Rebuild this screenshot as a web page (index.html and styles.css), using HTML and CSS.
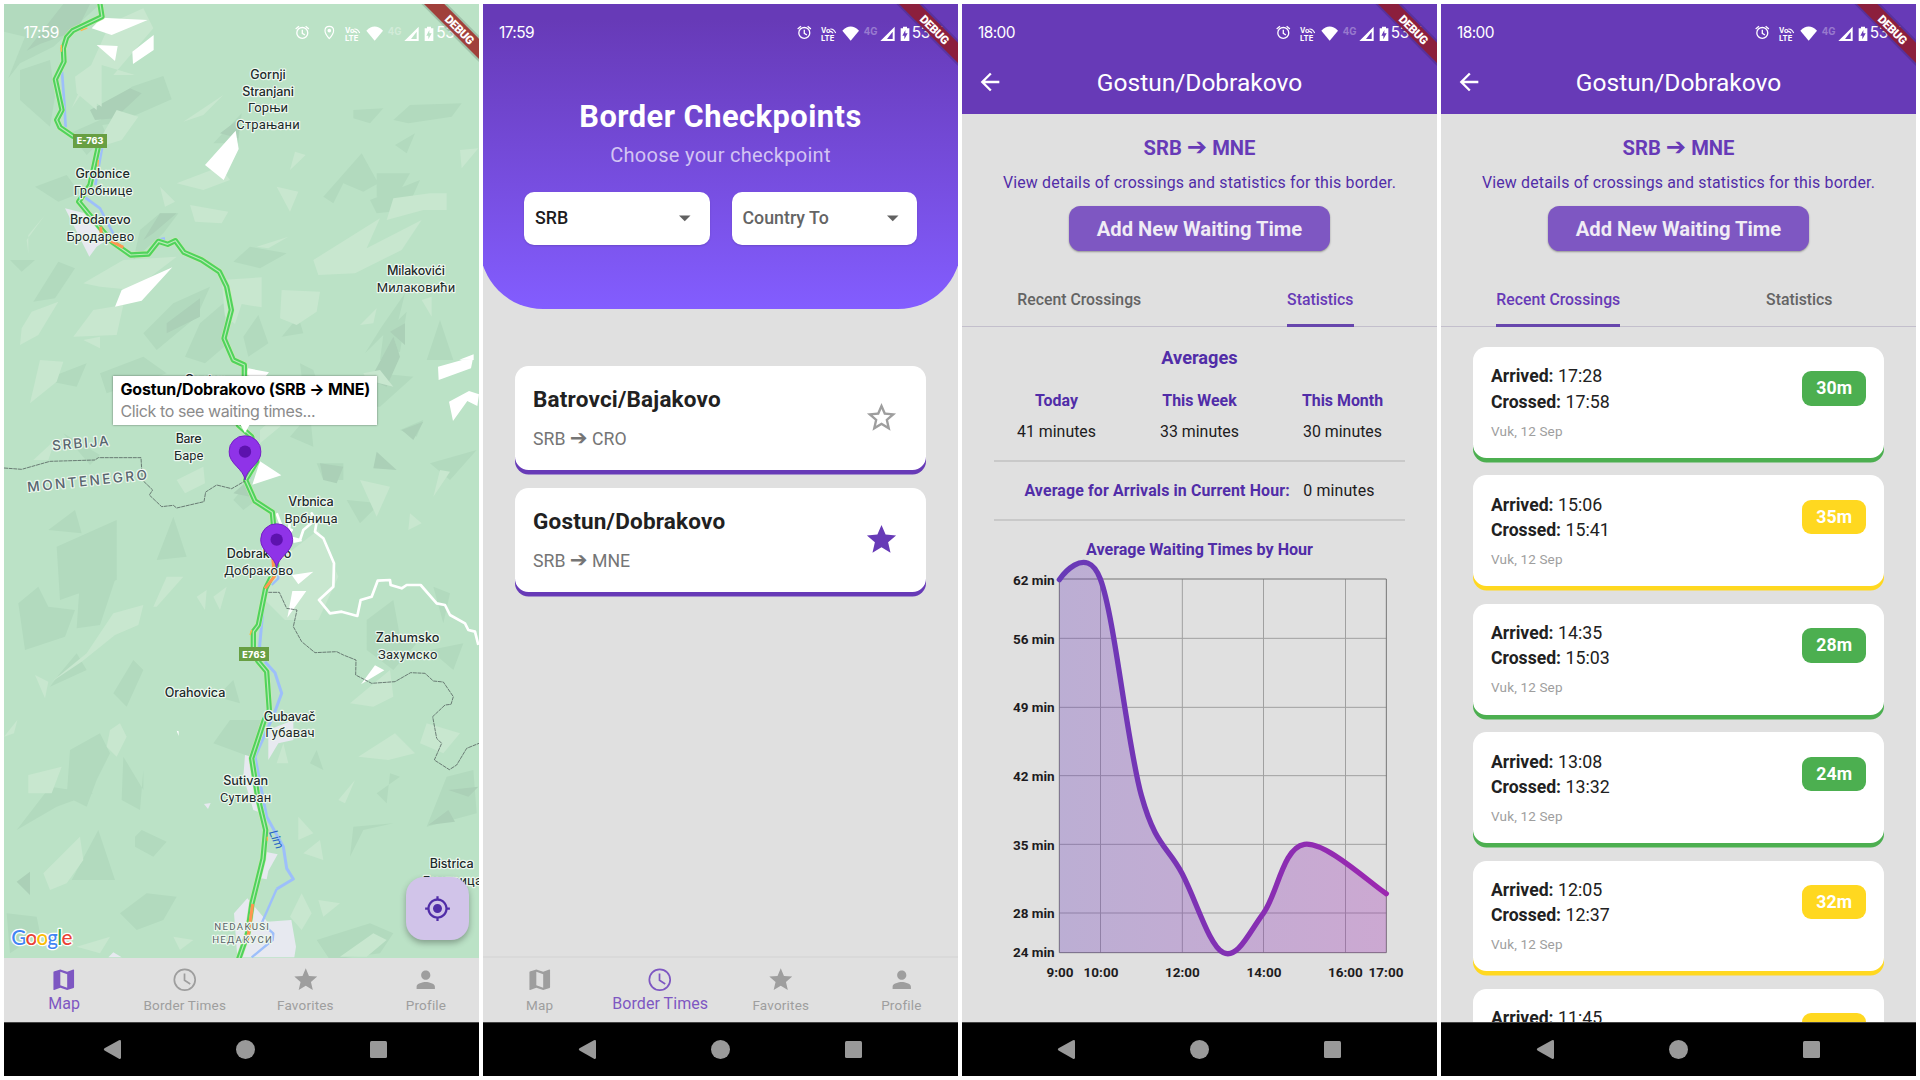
FILE: index.html
```html
<!DOCTYPE html>
<html lang="en">
<head>
<meta charset="utf-8">
<title>Border Checkpoints</title>
<link rel="stylesheet" href="styles.css">
</head>
<body>
<svg class="defs" aria-hidden="true">
  <symbol id="i-alarm" viewBox="0 0 44 44"><g fill="none" stroke="currentColor" stroke-width="4"><circle cx="22" cy="24" r="16.500"/><path d="M22 14v11l8 5M2 12l10-8M42 12L32 4"/></g></symbol>
  <symbol id="i-place" viewBox="0 0 44 44"><path d="M22 4c-8 0-13 6-13 13 0 9 13 24 13 24s13-15 13-24c0-7-5-13-13-13z" fill="none" stroke="currentColor" stroke-width="3.500"/><circle cx="22" cy="17" r="5.500" fill="currentColor"/></symbol>
  <symbol id="i-phone" viewBox="1015 66 290 56">
    <g fill="currentColor">
      <g font-family="Inter, sans-serif" font-weight="700" letter-spacing="0"><text x="1021" y="92" font-size="21" textLength="28" lengthAdjust="spacingAndGlyphs">Vo</text><text x="1021" y="116" font-size="24" textLength="40" lengthAdjust="spacingAndGlyphs">LTE</text><text x="1149" y="98" font-size="30" textLength="41" lengthAdjust="spacingAndGlyphs" opacity=".32">4G</text></g>
      <path d="M1110 116L1085 86q25-25 50 0z"/>
      <path d="M1242 74v43h-43zm-6 15l-17 22h17z" fill-rule="evenodd"/>
      <path d="M1260 79h7v-5h12v5h7v38h-26zm14 5l-9 17h6v11l10-18h-7z" fill-rule="evenodd"/>
    </g>
    <path d="M1049 81q10-1 16 12M1048 88q6 0 9 6M1054 77" stroke="currentColor" fill="none" stroke-width="3.500"/>
  </symbol>
  <symbol id="i-ribbon" viewBox="0 0 195 195">
    <path d="M10 0H88L195 107V186z" fill="#000" opacity=".14"/>
    <path class="band" d="M18 0H79L195 116V177z"/>
    <text transform="translate(116 86) rotate(45)" text-anchor="middle" font-family="Roboto, sans-serif" font-weight="900" font-size="35" textLength="108" fill="#fff">DEBUG</text>
  </symbol>
  <symbol id="i-map" viewBox="0 0 24 24"><path fill="currentColor" d="M20.500 3l-.16.03L15 5.100 9 3 3.360 4.900c-.21.07-.36.25-.36.48V20.500c0 .28.22.5.5.5l.16-.03L9 18.900l6 2.100 5.640-1.900c.21-.07.36-.25.36-.48V3.500c0-.28-.22-.5-.5-.5zM15 19l-6-2.110V5l6 2.110V19z"/></symbol>
  <symbol id="i-clock" viewBox="0 0 24 24"><g fill="none" stroke="currentColor" stroke-width="1.500"><circle cx="12" cy="12" r="9.100"/><path d="M11.800 6.500v6l5 3.200"/></g></symbol>
  <symbol id="i-star" viewBox="0 0 24 24"><path fill="currentColor" d="M12 17.270L18.180 21l-1.640-7.030L22 9.240l-7.190-.61L12 2 9.190 8.630 2 9.240l5.460 4.730L5.820 21z"/></symbol>
  <symbol id="i-star-o" viewBox="0 0 24 24"><path fill="currentColor" d="M22 9.240l-7.190-.62L12 2 9.190 8.630 2 9.240l5.460 4.730L5.820 21 12 17.270 18.180 21l-1.630-7.030L22 9.240zM12 15.400l-3.760 2.270 1-4.280-3.320-2.880 4.380-.38L12 6.100l1.710 4.040 4.380.38-3.320 2.880 1 4.280L12 15.400z"/></symbol>
  <symbol id="i-person" viewBox="0 0 24 24"><path fill="currentColor" d="M12 12c2.210 0 4-1.790 4-4s-1.790-4-4-4-4 1.790-4 4 1.790 4 4 4zm0 2c-2.670 0-8 1.340-8 4v2h16v-2c0-2.660-5.330-4-8-4z"/></symbol>
  <symbol id="i-back" viewBox="0 0 24 24"><path fill="currentColor" d="M20 11H7.830l5.590-5.590L12 4l-8 8 8 8 1.410-1.410L7.830 13H20v-2z"/></symbol>
  <symbol id="i-drop" viewBox="0 0 24 24"><path fill="currentColor" d="M7 10l5 5 5-5z"/></symbol>
  <symbol id="i-locate" viewBox="0 0 24 24"><path fill="currentColor" d="M12 8c-2.210 0-4 1.790-4 4s1.790 4 4 4 4-1.790 4-4-1.790-4-4-4zm8.940 3c-.46-4.170-3.770-7.480-7.940-7.940V1h-2v2.060C6.830 3.520 3.520 6.830 3.060 11H1v2h2.060c.46 4.170 3.770 7.480 7.940 7.940V23h2v-2.060c4.170-.46 7.480-3.770 7.940-7.940H23v-2h-2.060zM12 19c-3.870 0-7-3.130-7-7s3.130-7 7-7 7 3.130 7 7-3.130 7-7 7z"/></symbol>
  <symbol id="i-keys" viewBox="0 0 475 54"><g fill="#999"><path d="M96.500 26.300l14.500-8q2-.8 2 1.200v16q0 2-2 1.200l-14.500-8.200q-1.500-1.200 0-2.200z"/><circle cx="237.500" cy="27.500" r="9.500"/><rect x="362" y="19" width="17" height="17" rx="1.500"/></g></symbol>
  <symbol id="i-pin" viewBox="0 0 100 136"><path d="M50 134C46 100 2 86 2 49A48 48 0 0198 49C98 86 54 100 50 134z" fill="#8f33e8" stroke="#7420c4" stroke-width="3"/><circle cx="50" cy="49" r="18.500" fill="#5d12ae"/></symbol>
</svg>

<main class="board">
  <section class="phone phone-map">
    <div class="map">
      <svg class="map-art" viewBox="12 12 1425 2862">
        <defs><path id="road" d="M298 0l8 50-88 42-18 20-10 33 2 40-26 53 20 92-16 30 10 22 38 26 77 32-25 115-34 50 66 80 33 40 57 40 53-3 30-38 28 9 23-11 26 35 53 23 53 35 22 45 14 70-22 85 28 65 33 15v35l-18 145 40 35 15 75-33 55 28 63 52 34 5 53 8 110-33 65-22 110-15 20v65l15 25 25 30 8 115-15 30-38 115 18 115 24 100-8 87-33 133-13 90-28 80"/></defs>
        <g fill="#b2dabe">
          <path d="M12 12H300L215 90 160 140 60 190 25 235 75 110 12 95z"/>
          <path d="M60 210L150 180 165 290 150 380 60 300zM395 260l95-32 25 70-160 70-70 10zM210 400l90-40 20 45-60 60zM105 560l95-35 40 55-65 25zM30 780l75 0-40 35zM100 905l75-120 50 20-60 90zM480 640h55l-45 60-90 80 20-90z"/>
          <path d="M640 430l85-90-10 90zM1060 330l90-5-40 45-50-15zM1180 360l50-45 155-5-30 40-130 20zM1185 435l60-35-25 60zM970 590l115-130 50 90-45 25-60-25-30 60zM1130 520h100l-40 70h-60zM750 740l110 20-80 45-80-20zM1110 600l150-60-40 90-90 10z"/>
          <path d="M430 1000l90-90 110-50-40 90-120 100zM600 970l70-60 15 120-70 60-60-20zM730 1010l45-65 30 85-60 40zM845 1010l50-60 15 50zM1140 1080l10-75 70-70-20 120zM1215 880l-70 100-50 80 100-100zM1320 960l-40 120h80zM300 1120l130-50 70 50-180 60z"/>
          <path d="M190 1300l80 95 30-30zM130 1140l130-50-30 70zM900 1090l40 20 30 90-60-30zM820 1170l110 10-30 80-80-30zM1010 1220l120-100 110 10-100 90zM1200 1290l70-30-20 50zM950 1390h80v50h-60zM870 1310l60-70 10 100zM1290 1390l140-40-80 90zM700 1500l50-60 20 60-40 30z"/>
          <path d="M145 1590l80-60 20 70zM170 1640l180-80v180l-170 60zM470 1680l50-130 40 120zM240 1740l110-15-50 150-70 10zM55 1810l60-50 30 60 80 10-30 80-120 40zM1040 1500l100 10-60 60zM1100 1860l80-60 20 110 50 20-70 80-80-60zM1300 1760l50 20-20 90zM1290 1950l100-20-30 80zM180 2020l50-60 30 50-110 50zM650 2090l50-50 20 70zM340 2080l60-100 30 30-50 110z"/>
          <path d="M210 2250l90-50 30 60-40 80-30 80-60-30zM370 2270l60 100v-60l-10 120-55-30zM405 2510l20-20 75 35-40 45-55-30zM215 2640l80-150 50 150zM50 2490l100-130 130 20-110 40zM640 2230l50-70h110l-50 110zM950 2250l20 60-40-20zM1280 2480l60-150 80-20 10 130zM1060 2480l120-10-90 20-40 80zM360 2740l80-60 90 10-40 70-80 30zM1200 2330l-30-10-10 90-30-30zM20 2740l90 10 10 50-90 60zM950 2820l160-50 70 30-40 60-150 20z"/>
        </g>
        <g fill="#abd0b7">
          <path d="M190 12h80l-40 80-110 40-40 20zM270 330l120-65 35 15-80 75-60 5zM660 400l60-45-5 60zM430 720l50-80 50 0-70 60zM500 970l100-75v55l-100 50zM1170 995l45-25v65zM900 1210l30 50-70-30zM700 1480l45-40 5 50zM1205 1290l65-25-30 55zM960 1390l70 10-20 50-40-10zM1130 1355l60 55-70-5zM950 1175l80 60-80-30zM50 2645l40-30v70zM1285 2475l60-45 20 35z"/>
          <path d="M1110 1140l70-130 20 60-40 90zM1345 2370l90-10-30 30z"/>
        </g>
        <g fill="#c8e7cf">
          <path d="M330 70l100-45 30 60-120 140h65l-100-30v125l-60-40-30 45zM225 230l70-50-5 150-60-50zM550 365l120-80-60 60zM350 330l65 20-50 70-80 25zM530 550l130-50 30 40-80 30zM870 510l15-55 32 10zM830 560l65 15-25 60zM480 560l15 60 30-15zM570 615l115 20-20 35-80-5zM1380 450l55-5-50 60zM1290 580l50 0v50l-70 0-110 30 20-65z"/>
          <path d="M80 720l55-75-50 60v55zM940 780l200-125-40 90 165-85-60 90-140 70-110 5zM770 740l95-30-60 35zM250 850l120-70 160-10-130 100-100-10zM665 840l120-8v90l-60-10-20 60-30-25zM845 870l115 5-10 60-60 40-50-20zM1080 975l50-50-10 45zM65 985l30-50 80-30-60 100-55 30zM220 1010l60-80 90-15-20 90zM250 1020l50-10v35zM1265 900l30-10v60z"/>
          <path d="M120 1080l70 5-20 60-80 65zM100 1380l65-60-20 60zM530 1440l80-40 5 50-60 30zM780 1290l70-60-10 50-60 50zM1090 1120l50-10 40 50-80-20zM1080 1440l90 20-40 90zM1230 1540l35 30-40 20zM1300 1490l20-80 30 5zM460 1820l40-90 50 0-80 90zM590 1790l30-20-5 60zM640 1790l40-30-20 70zM260 1960l80-120 90-25-15 60-70 30-100 80-90 60zM105 2025l40 20-10 50zM1050 2110l120-100 10 80-60 30z"/>
          <path d="M825 1690l130-100 60 140-60 130-100 0-60-60z"/>
          <path d="M85 2325l100-25-30 80-70 0zM330 2190l30-20 20 40-30 60-30-30zM12 2210l40-50-10 40zM130 2620l110-110 10 70-50 70-50 20zM1075 2270l110-70 60 60-80 20zM1280 2170l100 30-50 60-70-30zM830 2290l20-60 15 60zM1015 2400l50-60-30 70zM895 2450l45 50-45 20zM910 2560l50-40 10 60zM870 2750l35-70 30 60-30 50zM955 2700l65 10-50 40zM230 2840l100-30-30 50zM1020 2870l100-70 40 20-60 50zM520 2810l60 10-40 30z"/>
        </g>
        <g fill="#fff">
          <path d="M275 85l30-32 138 7-108 45zM290 135l63 3-8 45zM397 155l64-50v45l-62 42zM615 495l92-103 9 55-45 93zM517 802L365 870 345 920l80-18zM1378 1079l43-16v17zM1314 1100l72-20h32l-5 25-97 35zM1347 1205l60-32 30 10-5 35-30-15-43 60zM745 1105l62 12-25 30-45-25zM780 1384l64 42-87 28zM875 1725l65-10-45 38zM877 1773h42l-57 80zM1083 2053l42-57 28 15zM530 2192l6 2v14z"/>
        </g>
        <g fill="#e7e9f0"><path d="M195 625l80 20 60 65-45 30-22 30zM735 2265l20 5 30 170-25-10-30-100zM795 2555l38 8-28 50-5 25-25-5zM702 2740l40-45 60 70 72-5 14 80-5 32H712zM805 2190l75-30v60l-45 10-30 50zM612 2412l20-3-8 18zM325 2872l15-15 25 15z"/></g>
        <g fill="none" stroke="#9dbffa" stroke-linejoin="round" stroke-width="9">
          <path d="M186 215l7 95 4 72M306 445l-20 110M255 592l45 33 42 80M470 720l25-5" stroke-width="8"/>
          <path d="M768 1385l-20 50M790 1815l-13 145M795 1985l30 33 20 62-22 60-58 130 35 180 50 90 10 65 20 32-50 30" />
          <path d="M835 1720v15l-20 20M830 2667l-45 103 35 30-2 20-63 52" stroke-width="7"/>
        </g>
        <g fill="none" stroke="#fff" stroke-linejoin="round" stroke-width="8">
          <path d="M830 1540l15 40 30 10-15 20 40 10 10-30 35-30-10-20 15 25-5 30 25 20 32 75-2 70-43 40 33 40 35-5 47 13 10-48 33-10 18-48 37-2 2 15 33 10 15-10h42l48 55 25 5 15 30 45 25 10 20 20 5 10 40M870 1560l-5 50M880 1625l25-5"/>
        </g>
        <g fill="none" stroke-linejoin="round">
          <use href="#road" class="road-case"/><use href="#road" class="road-body"/><use href="#road" class="road-mid"/>
          <path d="M302 680l3 40M330 722l40 20M818 1670l5 60-28 35M758 2712l-12 85-4 25" stroke="#ff9650" stroke-width="9"/>
          <path d="M295 480l-2 30M184 135v20M242 92l20-8M755 1890l-5 15M802 2510v12" stroke="#ffb54a" stroke-width="4"/>
        </g>
        <g fill="none" stroke="#5c6b66" stroke-width="2.600" stroke-dasharray="12 2">
          <path d="M12 1404l53 4 85-24 135-4 10-7h128l4 67 31 30-10 15 37 35 35-4 10 8 82-19 5-29 33-21 45 11 40-23"/>
          <path d="M805 1777h33l22 48 31 5-11 50 25 45 40 33 65-3 20 10 38 15-1 45 48 25 70-5 47-27 43 2 25 23 30 3 30 44-7 23-18 2-37 35 12 65 15 15-22 50 45 29 22-14 30-50 37-15"/>
        </g>
        <g class="shield"><path d="M219 402h102v42H219zM717 1941h90v42h-90z"/><text x="270" y="433" textLength="80">E-763</text><text x="762" y="1973" textLength="70">E763</text></g>
        <g class="latin">
          <text x="804" y="237" textLength="106">Gornji</text><text x="804" y="287" textLength="155">Stranjani</text>
          <text x="308" y="535" textLength="163">Grobnice</text><text x="301" y="672" textLength="182">Brodarevo</text>
          <text x="1248" y="826" textLength="174">Milakovići</text><text x="618" y="1151" textLength="128">Gostun</text>
          <text x="566" y="1330" textLength="78">Bare</text><text x="933" y="1518" textLength="136">Vrbnica</text>
          <text x="777" y="1675" textLength="194">Dobrakovo</text><text x="1223" y="1926" textLength="191">Zahumsko</text>
          <text x="585" y="2092" textLength="182">Orahovica</text><text x="869" y="2162" textLength="155">Gubavač</text>
          <text x="737" y="2355" textLength="135">Sutivan</text><text x="1355" y="2605" textLength="132">Bistrica</text>
        </g>
        <g class="cyr">
          <text x="804" y="337" textLength="120">Горњи</text><text x="804" y="387" textLength="190">Страњани</text>
          <text x="309" y="585" textLength="176">Гробнице</text><text x="301" y="722" textLength="203">Бродарево</text>
          <text x="1248" y="876" textLength="236">Милаковићи</text><text x="566" y="1380" textLength="88">Баре</text>
          <text x="933" y="1568" textLength="159">Врбница</text><text x="776" y="1724" textLength="207">Добраково</text>
          <text x="1223" y="1976" textLength="178">Захумско</text><text x="870" y="2211" textLength="148">Губавач</text>
          <text x="737" y="2405" textLength="154">Сутиван</text><text x="1357" y="2655" textLength="178">Бистрица</text>
        </g>
      </svg>
      <svg class="map-art map-top" viewBox="12 12 1425 2862">
        <g class="country"><text transform="translate(242 1341) rotate(-5)" y="3" textLength="170">SRBIJA</text><text transform="translate(263 1457) rotate(-6)" y="0" textLength="361">MONTENEGRO</text></g>
        <g class="town"><text x="725" y="2790" textLength="164">NEDAKUSI</text><text x="726" y="2828" textLength="179">НЕДАКУСИ</text></g>
        <text class="river" transform="translate(829 2518) rotate(66)" y="12" textLength="58">Lim</text>
        <text class="google" x="34" y="2834" textLength="183"><tspan fill="#4285f4">G</tspan><tspan fill="#ea4335">o</tspan><tspan fill="#fbbc05">o</tspan><tspan fill="#4285f4">g</tspan><tspan fill="#34a853">l</tspan><tspan fill="#ea4335">e</tspan></text>
        <use href="#i-pin" x="685" y="1306" width="100" height="136"/>
        <use href="#i-pin" x="780" y="1570" width="100" height="136"/>
      </svg>
      <div class="callout"><b>Gostun/Dobrakovo (SRB <i>→</i> MNE)</b><span>Click to see waiting times...</span></div>
      <div class="fab"><svg><use href="#i-locate"/></svg></div>
      <header class="status"><time>17:59</time><svg class="s-alarm"><use href="#i-alarm"/></svg><svg class="s-place"><use href="#i-place"/></svg><svg class="s-phone"><use href="#i-phone"/></svg><span>53%</span></header>
    </div>
    <nav class="tabs-bottom">
      <a class="on"><svg><use href="#i-map"/></svg>Map</a><a><svg><use href="#i-clock"/></svg>Border Times</a><a><svg><use href="#i-star"/></svg>Favorites</a><a><svg><use href="#i-person"/></svg>Profile</a>
    </nav>
    <footer class="keys"><svg><use href="#i-keys"/></svg></footer>
    <svg class="ribbon"><use href="#i-ribbon"/></svg>
  </section>

  <section class="phone">
    <div class="hero">
      <header class="status"><time>17:59</time><svg class="s-alarm"><use href="#i-alarm"/></svg><svg class="s-phone"><use href="#i-phone"/></svg><span>53%</span></header>
      <h1>Border Checkpoints</h1>
      <p>Choose your checkpoint</p>
      <div class="selects">
        <div class="select">SRB<svg><use href="#i-drop"/></svg></div>
        <div class="select empty">Country To<svg><use href="#i-drop"/></svg></div>
      </div>
    </div>
    <div class="checkpoints">
      <article class="checkpoint"><div><h2>Batrovci/Bajakovo</h2><p>SRB <i>➔</i> CRO</p></div><svg class="dim"><use href="#i-star-o"/></svg></article>
      <article class="checkpoint"><div><h2>Gostun/Dobrakovo</h2><p>SRB <i>➔</i> MNE</p></div><svg><use href="#i-star"/></svg></article>
    </div>
    <nav class="tabs-bottom ruled">
      <a><svg><use href="#i-map"/></svg>Map</a><a class="on"><svg><use href="#i-clock"/></svg>Border Times</a><a><svg><use href="#i-star"/></svg>Favorites</a><a><svg><use href="#i-person"/></svg>Profile</a>
    </nav>
    <footer class="keys"><svg><use href="#i-keys"/></svg></footer>
    <svg class="ribbon"><use href="#i-ribbon"/></svg>
  </section>

  <section class="phone">
    <div class="appbar">
      <header class="status"><time>18:00</time><svg class="s-alarm"><use href="#i-alarm"/></svg><svg class="s-phone"><use href="#i-phone"/></svg><span>53%</span></header>
      <div class="bar"><svg><use href="#i-back"/></svg><h1>Gostun/Dobrakovo</h1></div>
    </div>
    <div class="intro"><h2>SRB <i>➔</i> MNE</h2><p>View details of crossings and statistics for this border.</p><button>Add New Waiting Time</button></div>
    <div class="tabs"><span>Recent Crossings</span><span class="on">Statistics</span></div>
    <div class="stats">
      <h3>Averages</h3>
      <dl><div><dt>Today</dt><dd>41 minutes</dd></div><div><dt>This Week</dt><dd>33 minutes</dd></div><div><dt>This Month</dt><dd>30 minutes</dd></div></dl>
      <p class="hour"><b>Average for Arrivals in Current Hour:</b><span>0 minutes</span></p>
      <h4>Average Waiting Times by Hour</h4>
    </div>
    <svg class="chart" viewBox="6 681 1425 1239">
      <defs><linearGradient id="line" gradientUnits="userSpaceOnUse" x1="298" y1="0" x2="1279" y2="0"><stop offset="0" stop-color="#673ab7"/><stop offset="1" stop-color="#9c27b0"/></linearGradient></defs>
      <path d="M298 895H1279M298 1102H1279M298 1307H1279M298 1513H1279M298 1719H1279M421.500 717V1838M667 717V1838M910.500 717V1838M1156.500 717V1838" stroke="#a0a0a0" stroke-width="3"/>
      <path d="M298 717H1279V1838H298z" fill="none" stroke="#757575" stroke-width="3"/>
      <path d="M298 717C298 717 378 603.400 421 717C464 830.600 501 1211 544 1366C587 1521 624 1519 667 1602C710 1685 747.500 1817 790 1838C832.500 1859 867.500 1777 910 1720C952.500 1663 968 1523 1033 1513C1098 1503 1236 1635 1279 1661V1838H298z" fill="url(#line)" opacity=".3"/>
      <path d="M298 719C298 719 378 603.400 421 717C464 830.600 501 1211 544 1366C587 1521 624 1519 667 1602C710 1685 747.500 1817 790 1838C832.500 1859 867.500 1777 910 1720C952.500 1663 968 1523 1033 1513C1098 1503 1236 1635 1279 1661" fill="none" stroke="url(#line)" stroke-width="16" stroke-linecap="round"/>
      <g class="axis-y"><text x="284" y="735">62 min</text><text x="284" y="912">56 min</text><text x="284" y="1117">49 min</text><text x="284" y="1323">42 min</text><text x="284" y="1529">35 min</text><text x="284" y="1735">28 min</text><text x="284" y="1852">24 min</text></g>
      <g class="axis-x"><text x="300" y="1912">9:00</text><text x="423" y="1912">10:00</text><text x="667" y="1912">12:00</text><text x="912" y="1912">14:00</text><text x="1156" y="1912">16:00</text><text x="1278" y="1912">17:00</text></g>
    </svg>
    <footer class="keys"><svg><use href="#i-keys"/></svg></footer>
    <svg class="ribbon"><use href="#i-ribbon"/></svg>
  </section>

  <section class="phone">
    <div class="appbar">
      <header class="status"><time>18:00</time><svg class="s-alarm"><use href="#i-alarm"/></svg><svg class="s-phone"><use href="#i-phone"/></svg><span>53%</span></header>
      <div class="bar"><svg><use href="#i-back"/></svg><h1>Gostun/Dobrakovo</h1></div>
    </div>
    <div class="intro"><h2>SRB <i>➔</i> MNE</h2><p>View details of crossings and statistics for this border.</p><button>Add New Waiting Time</button></div>
    <div class="tabs"><span class="on">Recent Crossings</span><span>Statistics</span></div>
    <div class="crossings">
      <article class="crossing fast"><div><p><b>Arrived:</b> 17:28</p><p><b>Crossed:</b> 17:58</p><small>Vuk, 12 Sep</small></div><em>30m</em></article>
      <article class="crossing slow"><div><p><b>Arrived:</b> 15:06</p><p><b>Crossed:</b> 15:41</p><small>Vuk, 12 Sep</small></div><em>35m</em></article>
      <article class="crossing fast"><div><p><b>Arrived:</b> 14:35</p><p><b>Crossed:</b> 15:03</p><small>Vuk, 12 Sep</small></div><em>28m</em></article>
      <article class="crossing fast"><div><p><b>Arrived:</b> 13:08</p><p><b>Crossed:</b> 13:32</p><small>Vuk, 12 Sep</small></div><em>24m</em></article>
      <article class="crossing slow"><div><p><b>Arrived:</b> 12:05</p><p><b>Crossed:</b> 12:37</p><small>Vuk, 12 Sep</small></div><em>32m</em></article>
      <article class="crossing slow"><div><p><b>Arrived:</b> 11:45</p></div><em></em></article>
    </div>
    <footer class="keys"><svg><use href="#i-keys"/></svg></footer>
    <svg class="ribbon"><use href="#i-ribbon"/></svg>
  </section>
</main>
</body>
</html>
```
FILE: styles.css
```css
* { box-sizing: border-box; margin: 0; padding: 0; }
body { background: #fff; font-family: Roboto, sans-serif; overflow: hidden; }
.defs { display: none; }
i, em { font-style: normal; }
svg { display: block; flex: none; }

.board { display: grid; grid-template-columns: repeat(4, 475px); gap: 4px; padding: 4px 0 0 4px; }
.phone { --shift: 0px; position: relative; display: flex; flex-direction: column; height: 1072px; background: #e0e0e0; overflow: hidden; }
.phone-map { --shift: 3.600px; }

/* Status bar */
.status { display: flex; align-items: center; height: 57px; padding-left: 16px; color: #fff; font: 400 15.500px/20px Inter, sans-serif; letter-spacing: -.6px; width: 475px; }
.status time { flex: 1; padding-left: var(--shift); }
.s-alarm, .s-place { width: 14.600px; height: 14.600px; }
.s-alarm { margin-right: 6.700px; }
.s-place { margin: 0 7px 0 5px; }
.s-phone { width: 96.700px; height: 18.700px; margin-top: 2px; }
.status span { width: 46.300px; margin-left: -3.600px; letter-spacing: -.3px; }
.phone-map .status span { width: 42.800px; }

.ribbon { position: absolute; top: 0; right: 0; width: 65px; height: 65px; fill: #8c1f3d; }
.phone-map .ribbon { right: -3.600px; fill: #a0403b; }

/* System keys */
.keys { height: 54px; margin-top: auto; flex: none; position: relative; background: #000; border-top: 1px solid #444; }
.keys svg { width: 475px; height: 54px; margin: -1px 0 0 var(--shift); }

/* Bottom navigation */
.tabs-bottom { display: grid; grid-template-columns: repeat(4, 120.600px); height: 64px; flex: none; margin: auto 0 0 calc(-3.700px + var(--shift)); color: #9e9e9e; }
.tabs-bottom + .keys { margin-top: 0; }
.tabs-bottom a { display: flex; flex-direction: column; align-items: center; padding-top: 7.500px; font-size: 13.500px; line-height: 20px; letter-spacing: .2px; }
.tabs-bottom svg { width: 27.500px; height: 27.500px; margin-bottom: 2px; }
.tabs-bottom .on { color: #7e57c2; font-size: 16px; line-height: 18px; letter-spacing: .05px; }
.ruled { height: 66px; border-top: 2px solid #d9d9d9; }

/* Map */
.map { position: relative; height: 954px; overflow: hidden; background: #bbe2c6; }
.map .status { position: absolute; top: 0; left: 0; }
.map-art { position: absolute; top: 0; left: 0; width: 475px; height: 954px; }
.map-art text { text-anchor: middle; paint-order: stroke; stroke: #edf8ef; stroke-width: 7px; stroke-linejoin: round; fill: #1e2a2b; }
.road-case { stroke: #cdeaaf; stroke-width: 19px; }
.road-body { stroke: #50d35c; stroke-width: 16px; }
.road-mid { stroke: #b9ebb6; stroke-width: 3.500px; }
.latin { font: 500 38px Inter, sans-serif; }
.cyr { font: 400 39px Roboto, sans-serif; }
.shield { fill: #689f43; }
.map-art .shield text { fill: #fff; stroke: none; font: 800 27px Inter, sans-serif; }
.map-art .country text { fill: #5a6670; font: 500 41px Inter, sans-serif; }
.map-art .town text { fill: #596468; font: 400 29px Roboto, sans-serif; }
.map-art .river { fill: #2a67c4; stroke: none; font: italic 400 36px Inter, sans-serif; }
.map-art .google { text-anchor: start; font: 500 62px Lato, sans-serif; stroke: #fff; stroke-width: 8px; }
.callout { position: absolute; left: 109px; top: 372px; width: 264px; height: 48.500px; padding: 3px 7.500px; background: #fff; box-shadow: 0 0 2px rgba(0,0,0,.5); font: 400 16px/21.500px Inter, "Liberation Sans", sans-serif; color: #8b8b8b; white-space: nowrap; }
.callout b, .callout span { display: block; }
.callout b { color: #000; letter-spacing: -.17px; }
.callout span { letter-spacing: -.4px; }
.callout::after { content: ""; position: absolute; left: 127px; top: 48px; border: 5.500px solid transparent; border-top: 9px solid #fff; border-bottom: 0; }
.fab { position: absolute; left: 402px; top: 873.300px; width: 63px; height: 63px; display: grid; place-items: center; border-radius: 18px; background: #d1c4e9; color: #512da8; box-shadow: 0 3px 6px rgba(0,0,0,.3); }
.fab svg { width: 27px; height: 27px; }

/* Checkpoint list */
.hero { height: 305.300px; margin: 0 -3px; padding: 0 3px; flex: none; border-radius: 0 0 63px 63px; background: linear-gradient(#673ab7 5%, #835dff); color: #fff; text-align: center; }
.hero .status { text-align: left; }
.hero h1 { margin-top: 36px; font-size: 30.800px; line-height: 40px; font-weight: 700; letter-spacing: .48px; }
.hero p { margin-top: 3px; font-size: 20px; line-height: 30px; letter-spacing: .3px; color: #d3c4f3; }
.selects { display: grid; grid-template-columns: 1fr 1fr; gap: 22px; margin: 21.500px 41px 0; }
.select { display: flex; align-items: center; justify-content: space-between; height: 53.500px; padding: 0 11px 1px 11px; border-radius: 10px; background: #fff; color: #1d1b20; font-size: 17.800px; font-weight: 500; box-shadow: 0 1px 2px rgba(0,0,0,.15); }
.select svg { width: 27.500px; height: 27.500px; color: #616161; }
.select.empty { color: #646464; }
.checkpoints { display: grid; gap: 18px; padding: 57px 32px 0; }
.checkpoint { display: flex; justify-content: space-between; height: 103.700px; padding: 17px 27.500px 0 18px; border-radius: 13.500px; background: #fff; box-shadow: 0 4.500px #673ab7; color: #673ab7; }
.checkpoint h2 { font-size: 22.500px; line-height: 32px; font-weight: 700; letter-spacing: .2px; color: #212121; }
.checkpoint p { margin-top: 11px; font-size: 17.700px; line-height: 26px; color: #757575; }
.checkpoint svg { width: 35px; height: 35px; margin-top: 17px; }
.checkpoint .dim { color: #9e9e9e; }
p i, h2 i { font-family: "DejaVu Sans", sans-serif; line-height: 0; font-size: 1.2em; }

/* Detail screens */
.appbar { height: 110px; flex: none; background: #673ab7; color: #fff; }
.bar { display: grid; grid-template-columns: 28px 1fr 28px; align-items: center; height: 42px; padding: 0 14px; }
.bar svg { width: 28px; height: 28px; }
.bar h1 { text-align: center; font-size: 24.500px; font-weight: 400; }
.intro { display: flex; flex-direction: column; align-items: center; padding-top: 20px; flex: none; }
.intro h2 { font-size: 20.200px; line-height: 28px; color: #673ab7; }
.intro p { margin-top: 9px; font-size: 15.900px; line-height: 24px; letter-spacing: .18px; color: #512da8; }
.intro button { width: 260.500px; height: 45px; margin-top: 11.300px; border: 0; border-radius: 11.500px; background: #7e57c2; box-shadow: 0 1px 2px rgba(0,0,0,.35); color: #f0ecf5; font: 700 20.200px Roboto, sans-serif; }
.tabs { display: flex; justify-content: space-between; height: 55.500px; margin-top: 20.200px; padding: 0 83.500px 0 55.300px; flex: none; border-bottom: 1px solid #c3bfcc; color: #646464; font-size: 15.800px; font-weight: 500; line-height: 58px; }
.tabs .on { height: 55.500px; color: #673ab7; border-bottom: 3px solid #6746ad; border-radius: 3px 3px 0 0; }
.stats { text-align: center; padding: 0 32px; color: #512da8; flex: none; font-size: 15.900px; }
.stats h3 { margin-top: 16.500px; font-size: 18.200px; line-height: 30px; }
.stats dl { display: grid; grid-template-columns: repeat(3, 143px); margin: 17.500px -9px 0; padding-bottom: 18px; line-height: 20px; }
.stats dt { font-weight: 700; }
.stats dd { margin-top: 11.500px; color: #1d1b20; }
.hour { display: flex; justify-content: center; gap: 13.500px; height: 61px; border: solid #c9c9c9; border-width: 2px 0; line-height: 58px; letter-spacing: .14px; }
.hour span { color: #1d1b20; }
.stats h4 { margin-top: 18.500px; line-height: 20px; font-size: 16.100px; }
.chart { width: 475px; height: 413px; margin-top: 7px; overflow: visible; }
.axis-y, .axis-x { font: 700 40.500px Roboto, sans-serif; fill: #1d1b20; }
.axis-y { text-anchor: end; }
.axis-x { text-anchor: middle; }

.crossings { display: grid; grid-auto-rows: 110.800px; gap: 17.600px; height: 695px; flex: none; margin-bottom: -60px; padding: 20px 32px 0; }
.crossing { display: flex; justify-content: space-between; padding: 16.400px 18px 0 18px; border-radius: 13.500px; background: #fff; box-shadow: 0 4.500px var(--tone); color: #212121; }
.fast { --tone: #4caf50; }
.slow { --tone: #ffd820; }
.crossing p { height: 25.300px; font-size: 17.800px; line-height: 25px; }
.crossing b { font-size: 17.600px; }
.crossing small { display: block; margin-top: 6.700px; font-size: 13.500px; line-height: 20px; letter-spacing: .15px; color: #9e9e9e; }
.crossing em { width: 63.700px; height: 34.500px; margin-top: 8px; border-radius: 9px; background: var(--tone); color: #fff; font-size: 17.700px; font-weight: 700; line-height: 34px; text-align: center; }
```
